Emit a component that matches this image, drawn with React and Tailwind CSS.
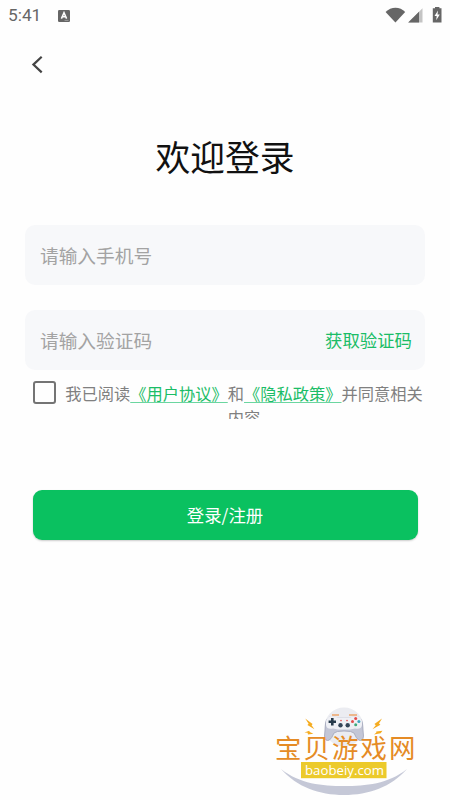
import { useState } from "react";

function StatusBar() {
    return (
        <div className="flex h-8 items-center justify-between pl-[8px] pr-[7px]">
            <div className="flex items-center">
                <span className="w-[50px] font-['Roboto',sans-serif] text-[17.3px] leading-none text-[#666]">5:41</span>
                <svg className="h-3 w-3" viewBox="0 0 12 12">
                    <rect width="12" height="12" rx="1.2" fill="#666" />
                    <path d="M3.4 8.6 L6 2.6 L8.6 8.6 M4.3 6.8 H7.7" fill="none" stroke="#fff" strokeWidth="1.5" />
                    <path d="M6.5 10.4 H10.5" stroke="#aaa" strokeWidth="0.8" />
                </svg>
            </div>
            {/* wifi, señal y batería */}
            <svg className="h-[18px] w-[58px]" viewBox="0 0 58 18">
                <path d="M0.6 5 C6 -0.8 15 -0.8 20.2 5 L10.4 15.6 Z" fill="#666" />
                <path d="M37.5 1.2 V15.4 H23.2 Z" fill="#c4c4c4" />
                <path d="M34 4.8 V15.4 H23.2 Z" fill="#666" />
                <path d="M50 0 H54.4 V1.3 H56.5 V15.6 H47.8 V1.3 H50 Z" fill="#666" />
                <path d="M53 3.4 L49.5 9 H51.7 L51.2 13.3 L54.8 7.6 H52.5 Z" fill="#fff" />
            </svg>
        </div>
    );
}

function SiteLogo() {
    return (
        <svg className="h-[96px] w-[150px]" viewBox="270 704 150 96">
            <circle cx="344" cy="727" r="19.5" fill="#ebecf1" />
            <path d="M281 769 C300 784 322 786 344 786 C366 786 388 784 407 769 C391 787 369 795 344 795 C319 795 297 787 281 769 Z" fill="#c5c8d7" />
            {/* mando */}
            <path d="M332 715 H339 M349 715 H357" stroke="#edb78c" strokeWidth="2" />
            <path d="M330 717 Q326 718 325.5 724 L324.5 736 Q325 742 329.5 740 Q332 738 334 733 Q336 731 344 731 Q352 731 354 733 Q356 738 358.5 740 Q363 742 363.5 736 L362.5 724 Q362 718 358 717 Q344 719 330 717 Z" fill="#c3c6d6" stroke="#a0a3b7" strokeWidth="0.8" />
            <path d="M331 716 Q325 717 326 725 Q327 730 333 728.5 L338 729.5 H350 L355 728.5 Q361 730 362 725 Q363 717 357 716 Q344 719 331 716 Z" fill="#eff0f5" />
            <path d="M332.3 718 V725.4 M328.6 721.7 H336" stroke="#263a4b" strokeWidth="2.6" />
            <circle cx="340.5" cy="725.3" r="2.2" fill="#344558" />
            <circle cx="347.7" cy="725.3" r="2.2" fill="#344558" />
            <circle cx="341" cy="720.6" r="0.8" fill="#e34c4c" />
            <circle cx="347" cy="720.6" r="0.8" fill="#e34c4c" />
            <circle cx="355.7" cy="718.5" r="1.5" fill="#e34c4c" />
            <circle cx="355.7" cy="724.8" r="1.5" fill="#40a97c" />
            <circle cx="352.5" cy="721.6" r="1.5" fill="#e34c4c" />
            <circle cx="358.9" cy="721.6" r="1.5" fill="#3fa5be" />
            {/* rayos */}
            <g fill="#f5ac21">
                <path d="M305.2 718.6 L312.6 724 L311.6 725.2 L314.5 729.2 L307.4 725 L308.6 723.8 Z" />
                <path d="M304.5 732.6 L309.2 730.8 L309.8 732 L313.4 733.8 L308 734.4 L307.6 732.8 Z" />
                <path d="M382 718.6 L379 723.6 L380.4 724.8 L372.5 729.2 L375.8 725.2 L374.4 724 Z" />
                <path d="M382.5 730.8 L380.6 733.2 L374 734.6 L376.4 732.6 L376.2 731.4 Z" />
            </g>
            <text x="275" y="758.1" textLength="140.5" lengthAdjust="spacing" fill="#e58b25" className="font-['Noto_Sans_CJK_SC',sans-serif] text-[26.4px]">宝贝游戏网</text>
            <rect x="301" y="762" width="85.5" height="16.2" fill="#ecca2b" />
            <text x="305" y="774.7" textLength="79" lengthAdjust="spacingAndGlyphs" fill="#fff" className="font-['Open_Sans',sans-serif] text-[13.5px] font-medium">baobeiy.com</text>
        </svg>
    );
}

export default function App() {
    const [phone, setPhone] = useState("");
    const [code, setCode] = useState("");
    const [agreed, setAgreed] = useState(false);

    return (
        <div className="flex h-[800px] w-[450px] flex-col overflow-hidden bg-[#fefefe] font-['Noto_Sans_CJK_SC',sans-serif]">
            <StatusBar />

            <button className="ml-[25px] mt-5 flex h-6 w-6 items-center justify-center" aria-label="返回">
                <svg className="h-6 w-6" viewBox="0 0 24 24">
                    <path d="M16.7 4.7 L8.4 12.6 L16.7 20.4" fill="none" stroke="#444" strokeWidth="2.2" />
                </svg>
            </button>

            <h1 className="mt-[54px] h-[52px] text-center text-[34.8px] leading-[52px] text-[#111]">欢迎登录</h1>

            <div className="mx-[25px] mt-[43px] flex h-[60px] shrink-0 items-center rounded-[10px] bg-[#f7f8fa] px-[15px]">
                <input
                    value={phone}
                    onChange={(e) => setPhone(e.target.value)}
                    placeholder="请输入手机号"
                    className="w-full bg-transparent text-[18.7px] text-gray-700 outline-none placeholder:text-[#a3a3a3]"
                />
            </div>

            <div className="mx-[25px] mt-[25px] flex h-[60px] shrink-0 items-center justify-between rounded-[10px] bg-[#f7f8fa] pl-[15px] pr-[13px]">
                <input
                    value={code}
                    onChange={(e) => setCode(e.target.value)}
                    placeholder="请输入验证码"
                    className="w-[200px] bg-transparent text-[18.7px] text-gray-700 outline-none placeholder:text-[#a3a3a3]"
                />
                <button className="text-[17.4px] text-[#1bbd67]">获取验证码</button>
            </div>

            <div className="ml-[33px] mt-[11px] flex h-[38px] shrink-0 items-start">
                <button
                    onClick={() => setAgreed(!agreed)}
                    aria-label="同意"
                    className={`h-[23px] w-[23px] shrink-0 rounded-[3px] border-2 border-[#747474] ${agreed ? "bg-[#07c160]" : ""}`}
                />
                <p className="ml-[8px] h-[38px] w-[360px] overflow-hidden text-center text-[16.25px] leading-[24px] text-[#808080]">
                    我已阅读<a className="text-[#1bbd67] underline decoration-[#6bd6a0] decoration-1 underline-offset-[2px]">《用户协议》</a>和<a className="text-[#1bbd67] underline decoration-[#6bd6a0] decoration-1 underline-offset-[2px]">《隐私政策》</a>并同意相关<br />内容
                </p>
            </div>

            <button className="ml-[32.5px] mt-[71px] h-[50px] w-[385px] shrink-0 rounded-[9px] bg-[#0ac160] text-[17.4px] text-white shadow-[0_1px_2px_rgba(0,0,0,0.2)]">
                登录/注册
            </button>

            {/* marca del sitio */}
            <div className="mt-auto flex justify-end pr-[30px]">
                <SiteLogo />
            </div>
        </div>
    );
}
